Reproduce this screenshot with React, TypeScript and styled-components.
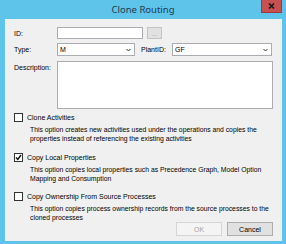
import styled, { createGlobalStyle } from "styled-components";

const GlobalStyle = createGlobalStyle`
    html, body {
        margin: 0;
        padding: 0;
        width: 286px;
        height: 244px;
        overflow: hidden;
        background: #5ec4ea;
    }
`

const Frame = styled.div`
    width: 286px;
    height: 244px;
    display: flex;
    flex-direction: column;
    background: #5ec4ea;
    font-family: "Liberation Sans", Arial, sans-serif;
    font-size: 7px;
    color: #000;
    box-sizing: border-box;
`

const TitleBar = styled.div`
    position: relative;
    height: 19px;
    display: flex;
    align-items: center;
    justify-content: center;
    flex-shrink: 0;
`

const Title = styled.span`
    font-family: "Noto Sans", "Open Sans", sans-serif;
    font-size: 9.5px;
    color: #1e3a4c;
    margin-top: -1px;
`

const CloseButton = styled.div`
    position: absolute;
    top: 0;
    right: 4px;
    width: 21px;
    height: 13px;
    background: #c75050;
    border: 1px solid #9e3a3a;
    border-top: none;
    box-sizing: border-box;
    display: flex;
    align-items: center;
    justify-content: center;
`

const Body = styled.div`
    flex: 1;
    margin: 0 4px 7px 5px;
    background: #f0f0f0;
    padding: 8px 9px 0 9px;
    display: flex;
    flex-direction: column;
`

const Row = styled.div<{ $h: number; $gap?: number }>`
    display: flex;
    align-items: ${({ $h }) => ($h > 20 ? "flex-start" : "center")};
    height: ${({ $h }) => $h}px;
    margin-bottom: ${({ $gap }) => $gap ?? 0}px;
`

const Label = styled.span<{ $w: number; $top?: number }>`
    width: ${({ $w }) => $w}px;
    flex-shrink: 0;
    padding-top: ${({ $top }) => $top ?? 0}px;
`

const Field = styled.div<{ $w: number; $h: number }>`
    width: ${({ $w }) => $w}px;
    height: ${({ $h }) => $h}px;
    background: #fff;
    border: 1px solid #abadb3;
    box-sizing: border-box;
    display: flex;
    align-items: center;
    justify-content: space-between;
    padding: 0 3px 0 2px;
`

const SmallButton = styled.div`
    width: 15px;
    height: 12px;
    margin-left: 4px;
    background: #e1e1e1;
    border: 1px solid #c4c4c4;
    box-sizing: border-box;
    color: #8a8a8a;
    font-size: 6px;
    display: flex;
    align-items: flex-end;
    justify-content: center;
    line-height: 8px;
`

const Option = styled.div<{ $gap: number }>`
    display: flex;
    flex-direction: column;
    margin-bottom: ${({ $gap }) => $gap}px;
`

const CheckRow = styled.div`
    display: flex;
    align-items: center;
    height: 9px;
`

const Box = styled.div`
    width: 9px;
    height: 9px;
    border: 1px solid #333;
    background: #fff;
    box-sizing: border-box;
    margin-right: 4px;
    display: flex;
    align-items: center;
    justify-content: center;
`

const Note = styled.p`
    margin: 4px 0 0 16px;
    line-height: 8.5px;
    font-size: 6.8px;
`

const Footer = styled.div`
    display: flex;
    justify-content: flex-end;
    gap: 5px;
    margin-top: auto;
    margin-bottom: 5px;
`

const DialogButton = styled.div<{ $disabled?: boolean }>`
    width: 46px;
    height: 14px;
    box-sizing: border-box;
    display: flex;
    align-items: center;
    justify-content: center;
    background: ${({ $disabled }) => ($disabled ? "#f4f4f4" : "#e1e1e1")};
    border: 1px solid ${({ $disabled }) => ($disabled ? "#d5d5d5" : "#adadad")};
    color: ${({ $disabled }) => ($disabled ? "#a3a3a3" : "#000")};
`

const Arrow = () => (
    <svg width="5" height="4" viewBox="0 0 5 4">
        <path d="M0.5 1 L2.5 3 L4.5 1" fill="none" stroke="#333" strokeWidth="1" />
    </svg>
)

const Combo = ({ w, value }: { w: number; value: string }) => (
    <Field $w={w} $h={13}>
        <span>{value}</span>
        <Arrow />
    </Field>
)

const Checkbox = ({ checked, label }: { checked?: boolean; label: string }) => (
    <CheckRow>
        <Box>
            {checked && (
                <svg width="7" height="7" viewBox="0 0 7 7">
                    <path d="M1 3.5 L2.8 5.5 L6 1" fill="none" stroke="#111" strokeWidth="1.4" />
                </svg>
            )}
        </Box>
        <span>{label}</span>
    </CheckRow>
)

const App = () => {
    return <>
        <GlobalStyle />
        <Frame>
            <TitleBar>
                <Title>Clone Routing</Title>
                <CloseButton>
                    <svg width="7" height="6" viewBox="0 0 7 6">
                        <path d="M1 0.5 L6 5.5 M6 0.5 L1 5.5" stroke="#1a1a1a" strokeWidth="1.6" />
                    </svg>
                </CloseButton>
            </TitleBar>
            <Body>
                <Row $h={12} $gap={4}>
                    <Label $w={43}>ID:</Label>
                    <Field $w={86} $h={12} />
                    <SmallButton>...</SmallButton>
                </Row>
                <Row $h={13} $gap={5}>
                    <Label $w={43}>Type:</Label>
                    <Combo w={78} value="M" />
                    <Label $w={31} style={{ marginLeft: 6 }}>PlantID:</Label>
                    <Combo w={100} value="GF" />
                </Row>
                <Row $h={48} $gap={4}>
                    <Label $w={43} $top={3}>Description:</Label>
                    <Field $w={218} $h={48} />
                </Row>
                <Option $gap={10}>
                    <Checkbox label="Clone Activities" />
                    <Note>
                        This option creates new activities used under the operations and copies the
                        properties instead of referencing the existing activities
                    </Note>
                </Option>
                <Option $gap={9}>
                    <Checkbox checked label="Copy Local Properties" />
                    <Note>
                        This option copies local properties such as Precedence Graph, Model Option
                        Mapping and Consumption
                    </Note>
                </Option>
                <Option $gap={0}>
                    <Checkbox label="Copy Ownership From Source Processes" />
                    <Note>
                        This option copies process ownership records from the source processes to the
                        cloned processes
                    </Note>
                </Option>
                <Footer>
                    <DialogButton $disabled>OK</DialogButton>
                    <DialogButton>Cancel</DialogButton>
                </Footer>
            </Body>
        </Frame>
    </>
}

export default App;
